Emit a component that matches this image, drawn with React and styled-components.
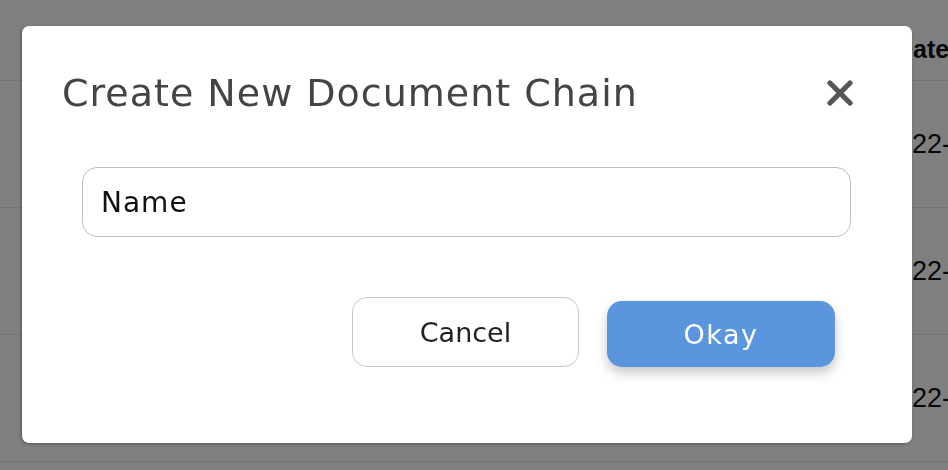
import React from "react";
import styled, { createGlobalStyle } from "styled-components";

const Global = createGlobalStyle`
  body {
    margin: 0;
    background: #ffffff;
    font-family: "Liberation Sans", Arial, sans-serif;
  }
`;

const rows = ["2022-03-14", "2022-03-11", "2022-03-02"];

const App = () => {
    return (
        <>
            <Global />
            <Table>
                <HeadRow>
                    <Cell />
                    <HeadCell>Date Created</HeadCell>
                </HeadRow>
                {rows.map((date, index) => (
                    <BodyRow key={index}>
                        <Cell />
                        <Cell>{date}</Cell>
                    </BodyRow>
                ))}
            </Table>

            <Overlay>
                <Modal>
                    <Header>
                        <Title>Create New Document Chain</Title>
                        <CloseButton aria-label="close">
                            <svg width="26" height="26" viewBox="0 0 26 26">
                                <path d="M3 3 L23 23 M23 3 L3 23" stroke="#555" strokeWidth="5.2" strokeLinecap="round" />
                            </svg>
                        </CloseButton>
                    </Header>
                    <Body>
                        <NameInput placeholder="Name" />
                    </Body>
                    <Actions>
                        <Button>Cancel</Button>
                        <Button primary>Okay</Button>
                    </Actions>
                </Modal>
            </Overlay>
        </>
    );
};

const Table = styled.div`
    display: flex;
    flex-direction: column;
    width: 100%;
`;

const HeadRow = styled.div`
    box-sizing: border-box;
    display: grid;
    grid-template-columns: 882px 1fr;
    height: 81px;
    align-items: center;
    border-bottom: 1px solid #e4e4e4;
`;

const BodyRow = styled(HeadRow)`
    height: 127px;
`;

const Cell = styled.div`
    font-size: 27px;
    color: #111;
    white-space: nowrap;
    overflow: hidden;
`;

const HeadCell = styled(Cell)`
    font-weight: 700;
    font-size: 25px;
    padding-left: 13px;
    padding-top: 18px;
`;

const Overlay = styled.div`
    position: fixed;
    inset: 0;
    background: rgba(0, 0, 0, 0.5);
    display: flex;
    align-items: flex-start;
    padding: 26px 36px 0 22px;
`;

const Modal = styled.div`
    width: 890px;
    height: 417px;
    background: #fff;
    border-radius: 7px;
    box-shadow: -1px 1px 3px rgba(0, 0, 0, 0.35);
    display: flex;
    flex-direction: column;
    font-family: "DejaVu Sans", Inter, sans-serif;
`;

const Header = styled.div`
    display: flex;
    justify-content: space-between;
    align-items: center;
    height: 54px;
    padding: 40px 59px 0 40px;
`;

const Title = styled.h2`
    margin: 0;
    font-size: 38px;
    font-weight: 400;
    letter-spacing: 1px;
    color: #444;
`;

const CloseButton = styled.button`
    border: none;
    background: none;
    padding: 0;
    display: flex;
    cursor: pointer;
`;

const Body = styled.div`
    padding: 47px 61px 0 60px;
`;

const NameInput = styled.input`
    box-sizing: border-box;
    width: 100%;
    height: 70px;
    border: 1.5px solid #bdbdbd;
    border-radius: 15px;
    padding: 0 18px;
    font-family: inherit;
    font-size: 28px;
    letter-spacing: 1px;
    outline: none;
    &::placeholder {
        color: #111;
    }
`;

const Actions = styled.div`
    display: flex;
    justify-content: flex-end;
    align-items: flex-end;
    gap: 28px;
    padding: 60px 77px 0 0;
`;

const Button = styled.button`
    box-sizing: border-box;
    width: ${(props) => (props.primary ? "228px" : "227px")};
    height: ${(props) => (props.primary ? "66px" : "70px")};
    border-radius: 15px;
    border: ${(props) => (props.primary ? "none" : "1.5px solid #c8c8c8")};
    background: ${(props) => (props.primary ? "#5b95dd" : "#fff")};
    color: ${(props) => (props.primary ? "#fff" : "#222")};
    box-shadow: ${(props) => (props.primary ? "0 6px 12px rgba(0,0,0,0.22)" : "none")};
    font-family: inherit;
    font-size: 27px;
    letter-spacing: ${(props) => (props.primary ? "1.5px" : "0")};
    cursor: pointer;
`;

export default App;
